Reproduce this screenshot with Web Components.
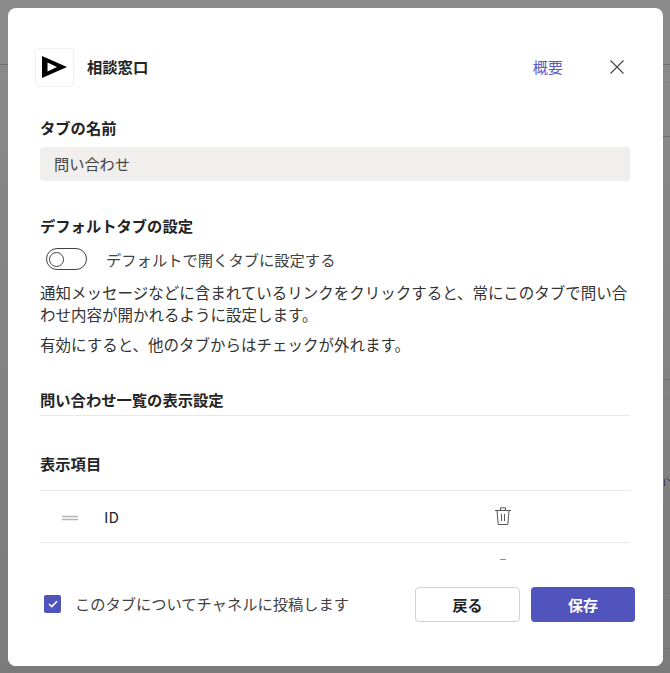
<!DOCTYPE html>
<html lang="ja"><head><meta charset="utf-8">
<style>
html,body{margin:0;padding:0;height:100%;}
body{width:670px;height:673px;overflow:hidden;background:#898989;font-family:"Noto Sans CJK JP","Noto Sans",sans-serif;color:#242424;}
</style></head><body>
<app-backdrop>
<tab-dialog>
  <dialog-header slot="header" name="相談窓口" link="概要"></dialog-header>
  <section-title>タブの名前</section-title>
  <text-field value="問い合わせ"></text-field>
  <section-title style="margin-top:34px">デフォルトタブの設定</section-title>
  <toggle-row>デフォルトで開くタブに設定する</toggle-row>
  <help-text>通知メッセージなどに含まれているリンクをクリックすると、常にこのタブで問い合わせ内容が開かれるように設定します。</help-text>
  <help-text style="margin-top:8px">有効にすると、他のタブからはチェックが外れます。</help-text>
  <section-title rule style="margin-top:34px">問い合わせ一覧の表示設定</section-title>
  <section-title style="margin-top:37px">表示項目</section-title>
  <item-row first>ID</item-row>
  <item-row></item-row>
  <dialog-footer slot="footer" label="このタブについてチャネルに投稿します" back="戻る" save="保存"></dialog-footer>
</tab-dialog>
</app-backdrop>
<script>
function def(name, css, html){
  customElements.define(name, class extends HTMLElement{
    connectedCallback(){
      if(this.shadowRoot) return;
      const r=this.attachShadow({mode:'open'});
      const attr=k=>this.getAttribute(k)||'';
      r.innerHTML='<style>'+css+'</style>'+(typeof html==='function'?html(attr):html);
    }
  });
}
const lines=[[64,1],[82,0],[136,1],[148,0],[338,0],[379,1],[392,0],[595,0],[648,1]];
def('app-backdrop',`:host{display:block;width:670px;height:673px;box-sizing:border-box;padding:8px 7px 7px 8px;position:relative;
  background:linear-gradient(#8b8b8b,#7b7b7b);}
  .l{position:absolute;left:663px;width:7px;height:1px;background:#848484}
  .d{background:#6f6f6f}
  .g{position:absolute;left:664px;top:476px}`,
  `<div class="l d" style="left:0;width:8px;top:64px"></div>`+
   lines.map(([y,d])=>`<div class="l${d?' d':''}" style="top:${y}px"></div>`).join('')+
   `<svg class="g" width="6" height="12" viewBox="0 0 6 12" fill="none" stroke="#3c3c62" stroke-width="1"><path d="M0.5 3V10M2.5 2L6 5"/></svg>
   <slot></slot>`);
def('tab-dialog',`:host{display:flex;flex-direction:column;width:655px;height:658px;box-sizing:border-box;background:#fff;border-radius:8px;overflow:hidden;position:relative;z-index:1;}
  .head{flex:none}
  .body{flex:1;min-height:0;overflow:hidden;padding:0 33px 0 32px;display:flex;flex-direction:column;}
  .foot{flex:none}`,
  `<div class="head"><slot name="header"></slot></div><div class="body"><slot></slot></div><div class="foot"><slot name="footer"></slot></div>`);
def('dialog-header',`:host{display:flex;align-items:center;height:60px;padding:29px 28px 20px 28px;box-sizing:content-box;}
  .logo{width:37px;height:37px;border:1px solid #f0f0f0;border-radius:4px;display:flex;align-items:center;justify-content:center;box-sizing:content-box;flex:none;margin-left:-1px}
  .name{margin-left:13px;font-size:15.3px;font-weight:700;line-height:20px;flex:1;color:#242424;padding-bottom:2px}
  .link{font-size:15.2px;color:#5b5fc7;line-height:20px;margin-right:38px;padding-bottom:2px}
  .x{width:32px;height:32px;display:flex;align-items:center;justify-content:center;margin-right:2px;flex:none}`,
  a=>`<div class="logo"><svg width="27" height="24" viewBox="0 0 27 24"><path d="M1 1 L26 12 L1 23 Z M6.5 7.6 L6.5 16.4 L16 12 Z" fill="#000" fill-rule="evenodd"/></svg></div>
  <div class="name">${a('name')}</div><div class="link">${a('link')}</div>
  <div class="x"><svg width="16" height="16" viewBox="0 0 16 16"><path d="M1.5 1.5 L14.5 14.5 M14.5 1.5 L1.5 14.5" stroke="#424242" stroke-width="1.1" fill="none"/></svg></div>`);
def('section-title',`:host{display:block;font-size:15.3px;font-weight:700;line-height:20px;color:#242424;flex:none}
  :host([rule]){border-bottom:1px solid #e8e8e8;padding-bottom:6px}`,`<slot></slot>`);
def('text-field',`:host{display:block;height:34px;margin-top:10px;background:#f0efee;border-radius:4px;padding:0 14px;font-size:15.2px;line-height:33px;color:#424242;flex:none}`,a=>a('value'));
def('toggle-row',`:host{display:flex;align-items:center;height:24px;margin-top:12px;font-size:15.3px;color:#424242;padding-left:6px;flex:none}
  .t{width:41px;height:22px;border:1px solid #424242;border-radius:11px;box-sizing:border-box;display:flex;align-items:center;padding-left:2px;margin-right:19px;flex:none}
  .k{width:15px;height:15px;border:1px solid #424242;border-radius:50%;box-sizing:border-box}`,
  `<div class="t"><div class="k"></div></div><slot></slot>`);
def('help-text',`:host{display:block;font-size:15.5px;line-height:22px;color:#333;margin-top:10px;flex:none}`,`<slot></slot>`);
def('item-row',`:host{display:grid;grid-template-columns:60px 1fr 40px 107px;align-items:center;height:52px;box-sizing:border-box;border-bottom:1px solid #e8e8e8;font-size:15.2px;color:#242424;flex:none}
  :host([first]){height:53px;border-top:1px solid #e8e8e8;margin-top:17px}
  .h{display:flex;justify-content:center;padding-top:2px}
  .id{padding-left:4px;padding-bottom:1px}
  .del{display:flex;justify-content:center;margin-bottom:2px}`,
  `<div class="h"><svg width="16" height="6" viewBox="0 0 16 6"><path d="M0 1.5H16M0 4.5H16" stroke="#b4b4b4" stroke-width="1.4"/></svg></div>
   <div class="id"><slot></slot></div>
   <div class="del"><svg width="18" height="18" viewBox="0 0 18 18" fill="none" stroke="#555" stroke-width="1"><path d="M1 3.5H17M3 3.5L4.2 17.5H13.8L15 3.5M6.5 3.5V.8H11.5V3.5M7.5 7V14M10.5 7V14"/></svg></div>`);
def('dialog-footer',`:host{display:flex;align-items:center;height:35px;padding:27px 28px 44px 36px;background:#fff}
  .c{width:17px;height:18px;background:#5054bc;border-radius:2px;display:flex;align-items:center;justify-content:center;flex:none;position:relative;top:-0.5px}
  .l{margin-left:14px;font-size:15.25px;color:#424242;flex:1;position:relative;top:-2px}
  button{font:700 15px "Noto Sans CJK JP",sans-serif;height:35px;border-radius:4px;box-sizing:border-box;padding:0;}
  .b{width:105px;background:#fff;border:1px solid #d1d1d1;color:#242424;margin-right:11px}
  .s{width:104px;background:#5054bc;border:none;color:#fff}`,
  a=>`<div class="c"><svg width="10" height="8" viewBox="0 0 10 8"><path d="M1 4L3.8 6.6L9 1.2" stroke="#fff" stroke-width="1.5" fill="none"/></svg></div>
  <div class="l">${a('label')}</div><button class="b">${a('back')}</button><button class="s">${a('save')}</button>`);
</script>
</body></html>
